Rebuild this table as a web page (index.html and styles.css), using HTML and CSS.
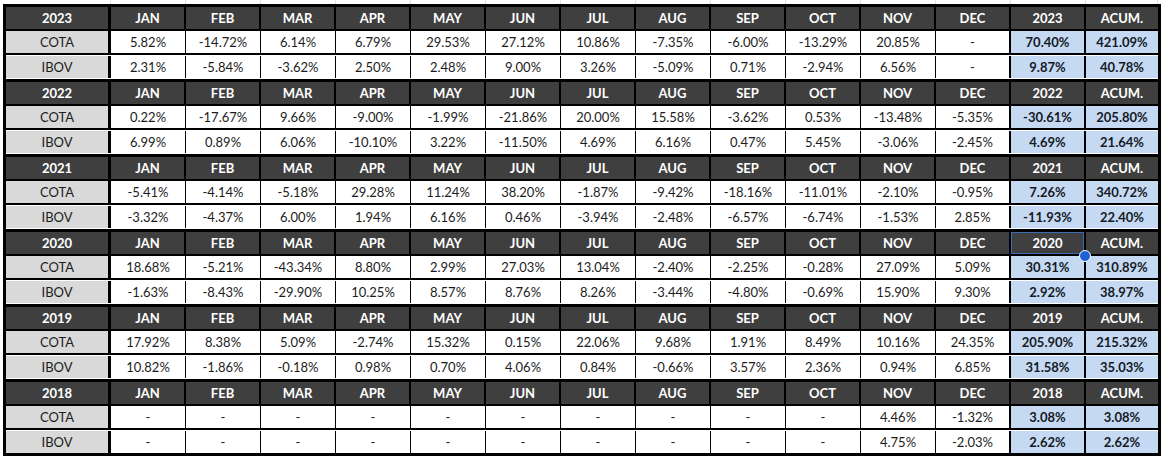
FILE: index.html
```html
<!DOCTYPE html>
<html lang="pt">
<head>
<meta charset="utf-8">
<title>Rentabilidade mensal</title>
<link rel="stylesheet" href="styles.css">
</head>
<body>
<div class="topstrip">
  <span></span><span></span><span></span><span></span><span></span><span></span><span></span><span></span><span></span><span></span><span></span><span></span><span></span><span></span><span></span>
</div>
<div class="sheet">
  <section class="block">
    <div class="row head"><div class="c first">2023</div><div class="c">JAN</div><div class="c">FEB</div><div class="c">MAR</div><div class="c">APR</div><div class="c">MAY</div><div class="c">JUN</div><div class="c">JUL</div><div class="c">AUG</div><div class="c">SEP</div><div class="c">OCT</div><div class="c">NOV</div><div class="c">DEC</div><div class="c">2023</div><div class="c last">ACUM.</div></div>
    <div class="row cota"><div class="c first">COTA</div><div class="c">5.82%</div><div class="c">-14.72%</div><div class="c">6.14%</div><div class="c">6.79%</div><div class="c">29.53%</div><div class="c">27.12%</div><div class="c">10.86%</div><div class="c">-7.35%</div><div class="c">-6.00%</div><div class="c">-13.29%</div><div class="c">20.85%</div><div class="c dec">-</div><div class="c tot">70.40%</div><div class="c tot last">421.09%</div></div>
    <div class="row ibov"><div class="c first">IBOV</div><div class="c">2.31%</div><div class="c">-5.84%</div><div class="c">-3.62%</div><div class="c">2.50%</div><div class="c">2.48%</div><div class="c">9.00%</div><div class="c">3.26%</div><div class="c">-5.09%</div><div class="c">0.71%</div><div class="c">-2.94%</div><div class="c">6.56%</div><div class="c dec">-</div><div class="c tot">9.87%</div><div class="c tot last">40.78%</div></div>
  </section>
  <section class="block">
    <div class="row head"><div class="c first">2022</div><div class="c">JAN</div><div class="c">FEB</div><div class="c">MAR</div><div class="c">APR</div><div class="c">MAY</div><div class="c">JUN</div><div class="c">JUL</div><div class="c">AUG</div><div class="c">SEP</div><div class="c">OCT</div><div class="c">NOV</div><div class="c">DEC</div><div class="c">2022</div><div class="c last">ACUM.</div></div>
    <div class="row cota"><div class="c first">COTA</div><div class="c">0.22%</div><div class="c">-17.67%</div><div class="c">9.66%</div><div class="c">-9.00%</div><div class="c">-1.99%</div><div class="c">-21.86%</div><div class="c">20.00%</div><div class="c">15.58%</div><div class="c">-3.62%</div><div class="c">0.53%</div><div class="c">-13.48%</div><div class="c dec">-5.35%</div><div class="c tot">-30.61%</div><div class="c tot last">205.80%</div></div>
    <div class="row ibov"><div class="c first">IBOV</div><div class="c">6.99%</div><div class="c">0.89%</div><div class="c">6.06%</div><div class="c">-10.10%</div><div class="c">3.22%</div><div class="c">-11.50%</div><div class="c">4.69%</div><div class="c">6.16%</div><div class="c">0.47%</div><div class="c">5.45%</div><div class="c">-3.06%</div><div class="c dec">-2.45%</div><div class="c tot">4.69%</div><div class="c tot last">21.64%</div></div>
  </section>
  <section class="block">
    <div class="row head"><div class="c first">2021</div><div class="c">JAN</div><div class="c">FEB</div><div class="c">MAR</div><div class="c">APR</div><div class="c">MAY</div><div class="c">JUN</div><div class="c">JUL</div><div class="c">AUG</div><div class="c">SEP</div><div class="c">OCT</div><div class="c">NOV</div><div class="c">DEC</div><div class="c">2021</div><div class="c last">ACUM.</div></div>
    <div class="row cota"><div class="c first">COTA</div><div class="c">-5.41%</div><div class="c">-4.14%</div><div class="c">-5.18%</div><div class="c">29.28%</div><div class="c">11.24%</div><div class="c">38.20%</div><div class="c">-1.87%</div><div class="c">-9.42%</div><div class="c">-18.16%</div><div class="c">-11.01%</div><div class="c">-2.10%</div><div class="c dec">-0.95%</div><div class="c tot">7.26%</div><div class="c tot last">340.72%</div></div>
    <div class="row ibov"><div class="c first">IBOV</div><div class="c">-3.32%</div><div class="c">-4.37%</div><div class="c">6.00%</div><div class="c">1.94%</div><div class="c">6.16%</div><div class="c">0.46%</div><div class="c">-3.94%</div><div class="c">-2.48%</div><div class="c">-6.57%</div><div class="c">-6.74%</div><div class="c">-1.53%</div><div class="c dec">2.85%</div><div class="c tot">-11.93%</div><div class="c tot last">22.40%</div></div>
  </section>
  <section class="block">
    <div class="row head"><div class="c first">2020</div><div class="c">JAN</div><div class="c">FEB</div><div class="c">MAR</div><div class="c">APR</div><div class="c">MAY</div><div class="c">JUN</div><div class="c">JUL</div><div class="c">AUG</div><div class="c">SEP</div><div class="c">OCT</div><div class="c">NOV</div><div class="c">DEC</div><div class="c sel">2020<span class="handle"></span></div><div class="c last">ACUM.</div></div>
    <div class="row cota"><div class="c first">COTA</div><div class="c">18.68%</div><div class="c">-5.21%</div><div class="c">-43.34%</div><div class="c">8.80%</div><div class="c">2.99%</div><div class="c">27.03%</div><div class="c">13.04%</div><div class="c">-2.40%</div><div class="c">-2.25%</div><div class="c">-0.28%</div><div class="c">27.09%</div><div class="c dec">5.09%</div><div class="c tot">30.31%</div><div class="c tot last">310.89%</div></div>
    <div class="row ibov"><div class="c first">IBOV</div><div class="c">-1.63%</div><div class="c">-8.43%</div><div class="c">-29.90%</div><div class="c">10.25%</div><div class="c">8.57%</div><div class="c">8.76%</div><div class="c">8.26%</div><div class="c">-3.44%</div><div class="c">-4.80%</div><div class="c">-0.69%</div><div class="c">15.90%</div><div class="c dec">9.30%</div><div class="c tot">2.92%</div><div class="c tot last">38.97%</div></div>
  </section>
  <section class="block">
    <div class="row head"><div class="c first">2019</div><div class="c">JAN</div><div class="c">FEB</div><div class="c">MAR</div><div class="c">APR</div><div class="c">MAY</div><div class="c">JUN</div><div class="c">JUL</div><div class="c">AUG</div><div class="c">SEP</div><div class="c">OCT</div><div class="c">NOV</div><div class="c">DEC</div><div class="c">2019</div><div class="c last">ACUM.</div></div>
    <div class="row cota"><div class="c first">COTA</div><div class="c">17.92%</div><div class="c">8.38%</div><div class="c">5.09%</div><div class="c">-2.74%</div><div class="c">15.32%</div><div class="c">0.15%</div><div class="c">22.06%</div><div class="c">9.68%</div><div class="c">1.91%</div><div class="c">8.49%</div><div class="c">10.16%</div><div class="c dec">24.35%</div><div class="c tot">205.90%</div><div class="c tot last">215.32%</div></div>
    <div class="row ibov"><div class="c first">IBOV</div><div class="c">10.82%</div><div class="c">-1.86%</div><div class="c">-0.18%</div><div class="c">0.98%</div><div class="c">0.70%</div><div class="c">4.06%</div><div class="c">0.84%</div><div class="c">-0.66%</div><div class="c">3.57%</div><div class="c">2.36%</div><div class="c">0.94%</div><div class="c dec">6.85%</div><div class="c tot">31.58%</div><div class="c tot last">35.03%</div></div>
  </section>
  <section class="block">
    <div class="row head"><div class="c first">2018</div><div class="c">JAN</div><div class="c">FEB</div><div class="c">MAR</div><div class="c">APR</div><div class="c">MAY</div><div class="c">JUN</div><div class="c">JUL</div><div class="c">AUG</div><div class="c">SEP</div><div class="c">OCT</div><div class="c">NOV</div><div class="c">DEC</div><div class="c">2018</div><div class="c last">ACUM.</div></div>
    <div class="row cota"><div class="c first">COTA</div><div class="c">-</div><div class="c">-</div><div class="c">-</div><div class="c">-</div><div class="c">-</div><div class="c">-</div><div class="c">-</div><div class="c">-</div><div class="c">-</div><div class="c">-</div><div class="c">4.46%</div><div class="c dec">-1.32%</div><div class="c tot">3.08%</div><div class="c tot last">3.08%</div></div>
    <div class="row ibov"><div class="c first">IBOV</div><div class="c">-</div><div class="c">-</div><div class="c">-</div><div class="c">-</div><div class="c">-</div><div class="c">-</div><div class="c">-</div><div class="c">-</div><div class="c">-</div><div class="c">-</div><div class="c">4.75%</div><div class="c dec">-2.03%</div><div class="c tot">2.62%</div><div class="c tot last">2.62%</div></div>
  </section>
</div>
</body>
</html>
```
FILE: styles.css
```css
* { box-sizing: border-box; }
html, body { margin: 0; padding: 0; background: #fff; }
body {
  font-family: Lato, "Open Sans", "Liberation Sans", sans-serif;
  font-size: 13px;
  color: #1c1c1c;
}
.topstrip {
  height: 4px;
  margin-left: 6px;
  display: grid;
  grid-template-columns: 105px repeat(13, 75px) 72px;
}
.topstrip span { border-right: 1px solid #e2e2e2; }
.sheet {
  margin-left: 3px;
  width: 1158px;
  border-left: 3px solid #000;
  border-right: 3px solid #000;
  border-bottom: 3px solid #000;
}
.row {
  display: grid;
  grid-template-columns: 105px repeat(13, 75px) 72px;
}
.c {
  display: flex;
  align-items: center;
  justify-content: center;
  border-right: 1px solid #000;
  background: #fff;
  white-space: nowrap;
}
.c.first { border-right-width: 3px; background: #d9d9d9; }
.c.dec, .c.tot { border-right-width: 2px; }
.c.last { border-right: 0; }
.c.tot { background: #c6d9f2; font-weight: 700; color: #141a26; }

.head {
  height: 27px;
  border-top: 3px solid #000;
  border-bottom: 2px solid #000;
  background: #000;
}
.head .c {
  background: #3f3f3f;
  color: #fff;
  font-weight: 700;
  border-right: 2px solid #000;
}
.head .c.first { border-right-width: 3px; }
.head .c.last { border-right: 0; }

.cota {
  height: 24px;
  border-bottom: 2px solid #000;
}
.ibov {
  height: 24px;
  border-top: 1px solid #fff;
  border-bottom: 1px solid #fff;
}
.block:last-child .ibov { height: 23px; border-bottom: 0; }

.sel { position: relative; }
.sel::after {
  content: "";
  position: absolute;
  inset: 0 0 0 0;
  border: 1.5px solid #3d6bb3;
  pointer-events: none;
}
.handle {
  position: absolute;
  right: -7px;
  bottom: -8px;
  width: 12px;
  height: 12px;
  border-radius: 50%;
  background: #1a62d6;
  border: 1.5px solid #fff;
  z-index: 2;
}
```
